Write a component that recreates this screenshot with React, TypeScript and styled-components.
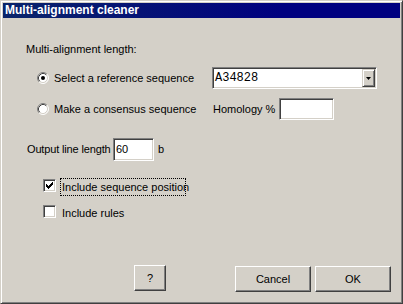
import React from 'react';
import styled, { createGlobalStyle } from 'styled-components';

const Global = createGlobalStyle`
  html, body { margin: 0; padding: 0; background: #D4D0C8; }
  body { font-family: "Liberation Sans", Arial, sans-serif; font-size: 11px; color: #000; }
  * { box-sizing: border-box; }
`;

const Window = styled.div`
  width: 403px;
  height: 304px;
  background: #D4D0C8;
  border: 1px solid;
  border-color: #D4D0C8 #404040 #404040 #D4D0C8;
  box-shadow: inset 1px 1px #ffffff, inset -1px -1px #808080;
  padding: 2px;
  display: flex;
  flex-direction: column;
`;

const TitleBar = styled.div`
  height: 15px;
  flex: none;
  background: linear-gradient(to right, #0A246A, #000080 70%);
  color: #ffffff;
  font: bold 12px "Liberation Sans", Arial, sans-serif;
  line-height: 15px;
  padding-left: 2px;
  white-space: nowrap;
`;

const Body = styled.div`
  flex: 1;
  display: flex;
  flex-direction: column;
  padding: 0 0 9px 23px;
`;

const SectionLabel = styled.div`
  margin-top: 25px;
  line-height: 13px;
  height: 13px;
`;

const Row = styled.div<{ $mt: number; $h?: number }>`
  display: flex;
  align-items: center;
  margin-top: ${p => p.$mt}px;
  height: ${p => p.$h ?? 22}px;
`;

const RadioBox = styled.span`
  width: 12px;
  height: 12px;
  margin-left: 11px;
  flex: none;
  display: block;
  svg { display: block; }
`;

const OptionLabel = styled.span<{ $w: number; $pl?: number; $tight?: boolean }>`
  width: ${p => p.$w}px;
  padding-left: ${p => p.$pl ?? 0}px;
  letter-spacing: ${p => (p.$tight ? '-0.15px' : 'normal')};
  flex: none;
  line-height: 13px;
  white-space: nowrap;
`;

const Sunken = styled.div<{ $w: number; $h?: number }>`
  width: ${p => p.$w}px;
  height: ${p => p.$h ?? 22}px;
  flex: none;
  background: #ffffff;
  border: 1px solid;
  border-color: #808080 #ffffff #ffffff #808080;
  box-shadow: inset 1px 1px #404040, inset -1px -1px #D4D0C8;
  padding: 1px;
  display: flex;
  align-items: center;
`;

const FieldText = styled.span<{ $mono?: boolean }>`
  flex: 1;
  padding-left: 1px;
  font-family: ${p => (p.$mono ? '"Liberation Mono", "Courier New", monospace' : '"Liberation Sans", Arial, sans-serif')};
  font-size: ${p => (p.$mono ? '12px' : '11px')};
  line-height: 13px;
`;

const DropButton = styled.div`
  width: 13px;
  height: 18px;
  flex: none;
  background: #D4D0C8;
  border: 1px solid;
  border-color: #D4D0C8 #404040 #404040 #D4D0C8;
  box-shadow: inset 1px 1px #ffffff, inset -1px -1px #808080;
  display: flex;
  align-items: center;
  justify-content: center;
  svg { display: block; }
`;

const Unit = styled.span`
  margin-left: 4px;
  line-height: 13px;
`;

const CheckRow = styled.div<{ $mt: number }>`
  display: flex;
  align-items: flex-start;
  margin-top: ${p => p.$mt}px;
  height: 18px;
`;

const CheckBox = styled.span`
  width: 13px;
  height: 13px;
  margin-left: 17px;
  margin-top: 1px;
  flex: none;
  background: #ffffff;
  border: 1px solid;
  border-color: #808080 #ffffff #ffffff #808080;
  box-shadow: inset 1px 1px #404040, inset -1px -1px #D4D0C8;
  position: relative;
  svg { position: absolute; left: 2px; top: 2px; display: block; }
`;

const CheckLabel = styled.span<{ $focus?: boolean }>`
  margin-left: 4px;
  height: 18px;
  padding: 0 0 0 1px;
  width: ${p => (p.$focus ? '126px' : 'auto')};
  line-height: 17px;
  border: 1px dotted ${p => (p.$focus ? '#000' : 'transparent')};
  white-space: nowrap;
`;

const ButtonRow = styled.div`
  margin-top: auto;
  display: flex;
  align-items: flex-end;
  height: 27px;
`;

const Button = styled.div<{ $w: number; $ml: number; $top?: boolean }>`
  width: ${p => p.$w}px;
  height: 26px;
  margin-left: ${p => p.$ml}px;
  align-self: ${p => (p.$top ? 'flex-start' : 'flex-end')};
  flex: none;
  background: #D4D0C8;
  border: 1px solid;
  border-color: #ffffff #404040 #404040 #ffffff;
  box-shadow: inset -1px -1px #808080;
  display: flex;
  align-items: center;
  justify-content: center;
  line-height: 13px;
`;

const Radio: React.FC<{ checked?: boolean }> = ({ checked }) => (
  <RadioBox>
    <svg width="12" height="12" viewBox="0 0 12 12">
      <circle cx="6" cy="6" r="5" fill="#ffffff" />
      <path d="M2.11 9.89 A5.5 5.5 0 0 1 9.89 2.11" stroke="#808080" fill="none" strokeWidth="1" />
      <path d="M9.89 2.11 A5.5 5.5 0 0 1 2.11 9.89" stroke="#ffffff" fill="none" strokeWidth="1" />
      <path d="M2.82 9.18 A4.5 4.5 0 0 1 9.18 2.82" stroke="#404040" fill="none" strokeWidth="1" />
      <path d="M9.18 2.82 A4.5 4.5 0 0 1 2.82 9.18" stroke="#D4D0C8" fill="none" strokeWidth="1" />
      {checked && <circle cx="6" cy="6" r="2" fill="#000000" />}
    </svg>
  </RadioBox>
);

const Check: React.FC<{ checked?: boolean }> = ({ checked }) => (
  <CheckBox>
    {checked && (
      <svg width="7" height="7" viewBox="0 0 7 7">
        <path d="M0 2 H1 V3 H2 V4 H3 V3 H4 V2 H5 V1 H6 V0 H7 V3 H6 V4 H5 V5 H4 V6 H3 V7 H2 V6 H1 V5 H0 Z" fill="#000000" />
      </svg>
    )}
  </CheckBox>
);

export default function App() {
  return (
    <>
      <Global />
      <Window>
        <TitleBar>Multi-alignment cleaner</TitleBar>
        <Body>
          <SectionLabel>Multi-alignment length:</SectionLabel>
          <Row $mt={11}>
            <Radio checked />
            <OptionLabel $w={163} $pl={5}>Select a reference sequence</OptionLabel>
            <Sunken $w={165}>
              <FieldText $mono>A34828</FieldText>
              <DropButton>
                <svg width="5" height="3" viewBox="0 0 5 3">
                  <path d="M0 0 H5 L2.5 3 Z" fill="#000000" />
                </svg>
              </DropButton>
            </Sunken>
          </Row>
          <Row $mt={9}>
            <Radio />
            <OptionLabel $w={163} $pl={5}>Make a consensus sequence</OptionLabel>
            <OptionLabel $w={67} $pl={1}>Homology %</OptionLabel>
            <Sunken $w={55} />
          </Row>
          <Row $mt={18}>
            <OptionLabel $w={87} $pl={1} $tight>Output line length</OptionLabel>
            <Sunken $w={41} $h={23}>
              <FieldText>60</FieldText>
            </Sunken>
            <Unit>b</Unit>
          </Row>
          <CheckRow $mt={18}>
            <Check checked />
            <CheckLabel $focus>Include sequence position</CheckLabel>
          </CheckRow>
          <CheckRow $mt={8}>
            <Check />
            <CheckLabel>Include rules</CheckLabel>
          </CheckRow>
          <ButtonRow>
            <Button $w={32} $ml={108} $top>?</Button>
            <Button $w={76} $ml={69}>Cancel</Button>
            <Button $w={76} $ml={4}>OK</Button>
          </ButtonRow>
        </Body>
      </Window>
    </>
  );
}
